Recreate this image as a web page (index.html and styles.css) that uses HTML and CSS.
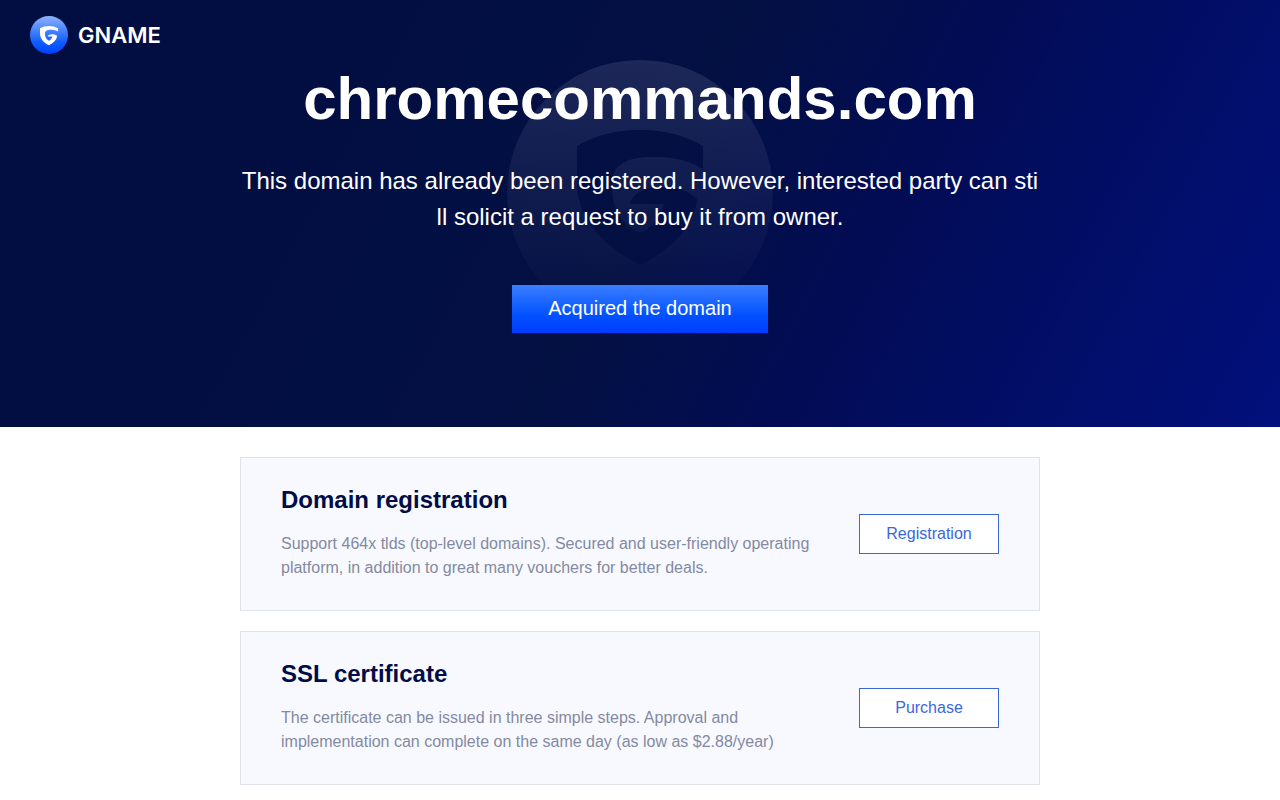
FILE: index.html
```html
<!DOCTYPE html>
<html lang="en">
<head>
    <meta charset="UTF-8">
    <meta name="viewport" content="width=device-width, initial-scale=1.0">
    <title>chromecommands.com</title>
    <link rel="stylesheet" href="styles.css">
</head>
<body>
    <header class="banner">
        <svg class="watermark" viewBox="0 0 266 266" aria-hidden="true">
            <defs>
                <linearGradient id="fade" x1="0" y1="0" x2="0" y2="1">
                    <stop offset="0" stop-color="#e0dcff" stop-opacity=".12"/>
                    <stop offset="1" stop-color="#e0dcff" stop-opacity="0"/>
                </linearGradient>
                <mask id="cut">
                    <rect width="266" height="266" fill="#fff"/>
                    <use href="#shield" fill="#000"/>
                </mask>
                <path id="shield" d="M70 86Q97 70 133 70Q169 70 196 86V109C183 101 168 97 149 97C118 96 105 106 105 123C105 150 113 164 133 173C145 168 154 157 157 144H123C126 132 140 127 158 127C172 127 181 131 190 139C187 168 163 190 133 205C94 184 70 158 70 122Z"/>
            </defs>
            <circle cx="133" cy="133" r="133" fill="url(#fade)" mask="url(#cut)"/>
        </svg>
        <div class="top">
            <a class="logo" href="#">
                <svg class="logo-icon" viewBox="0 0 266 266" aria-hidden="true">
                    <linearGradient id="ball" x1="0" y1="0" x2="0" y2="1">
                        <stop offset="0" stop-color="#8db2ff"/>
                        <stop offset=".7" stop-color="#0f5cff"/>
                        <stop offset="1" stop-color="#0040ff"/>
                    </linearGradient>
                    <circle cx="133" cy="133" r="133" fill="url(#ball)"/>
                    <use href="#shield" fill="#fff"/>
                </svg>
                <span>GNAME</span>
            </a>
        </div>
        <div class="intro">
            <h1>chromecommands.com</h1>
            <p>This domain has already been registered. However, interested party can still solicit a request to buy it from owner.</p>
            <button class="acquire" type="button">Acquired the domain</button>
        </div>
    </header>

    <main class="list">
        <section class="card">
            <div class="card-text">
                <h2>Domain registration</h2>
                <p>Support 464x tlds (top-level domains). Secured and user-friendly operating platform, in addition to great many vouchers for better deals.</p>
            </div>
            <a class="card-btn" href="#">Registration</a>
        </section>
        <section class="card">
            <div class="card-text">
                <h2>SSL certificate</h2>
                <p>The certificate can be issued in three simple steps. Approval and implementation can complete on the same day (as low as $2.88/year)</p>
            </div>
            <a class="card-btn" href="#">Purchase</a>
        </section>
    </main>
</body>
</html>
```
FILE: styles.css
```css
*{
    box-sizing: border-box;
    margin: 0;
    padding: 0;
}
body{
    font-family: "Liberation Sans", Arial, sans-serif;
    font-size: 16px;
    line-height: 24px;
    background-color: #fff;
}
a{
    text-decoration: none;
}

/* banner */
.banner{
    position: relative;
    padding-bottom: 94px;
    color: #fff;
    background: linear-gradient(118deg, #020d42 0%, #031042 50%, #020c54 66%, #01107c 100%);
}
.watermark{
    position: absolute;
    top: 60px;
    left: 50%;
    width: 266px;
    height: 266px;
    transform: translateX(-50%);
}
.top{
    padding: 16px 30px;
}
.logo{
    display: inline-flex;
    align-items: center;
    gap: 10px;
    height: 38px;
    color: #fff;
    font-family: Inter, sans-serif;
    font-size: 22px;
    font-weight: 600;
    vertical-align: top;
}
.logo-icon{
    width: 38px;
    height: 38px;
}
.intro{
    position: relative;
    max-width: 800px;
    margin: 0 auto;
    text-align: center;
}
.intro h1{
    margin-bottom: 35px;
    font-size: 60px;
    line-height: 58px;
}
.intro p{
    margin-bottom: 50px;
    font-size: 24px;
    line-height: 36px;
    word-break: break-all;
}
.acquire{
    display: block;
    min-width: 256px;
    height: 48px;
    margin: 0 auto;
    padding-bottom: 2px;
    border: none;
    color: #fff;
    font-family: inherit;
    font-size: 20px;
    background: linear-gradient(#3c7eff, #0050ff 65%, #003cff);
    cursor: pointer;
}

/* cards */
.list{
    display: flex;
    flex-direction: column;
    gap: 20px;
    max-width: 800px;
    margin: 30px auto 0;
}
.card{
    display: flex;
    align-items: center;
    justify-content: space-between;
    gap: 40px;
    padding: 30px 40px;
    border: 1px solid #dfe2ec;
    background-color: #f7f9ff;
}
.card-text{
    max-width: 530px;
}
.card h2{
    margin-bottom: 20px;
    color: #020d45;
    font-size: 24px;
    line-height: 24px;
}
.card p{
    color: #848a9f;
}
.card-btn{
    flex: none;
    width: 140px;
    border: 1px solid #3a68d8;
    color: #3a68e0;
    line-height: 38px;
    text-align: center;
    background-color: #fff;
}
```
